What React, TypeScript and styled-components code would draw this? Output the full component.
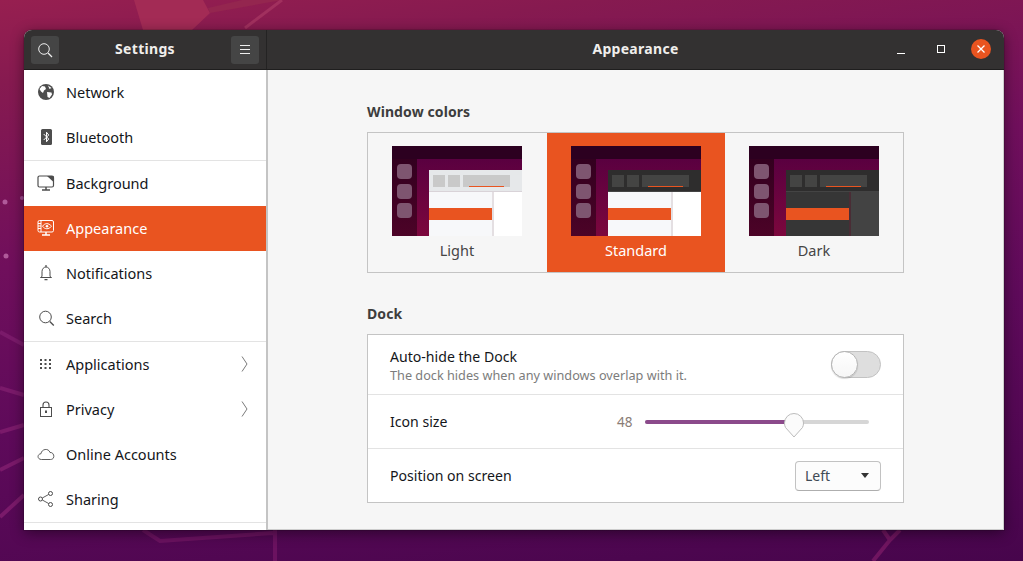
import * as React from 'react';
import styled, { createGlobalStyle } from 'styled-components';

const accent = '#e95420';
const uiFont = '"Noto Sans", "Open Sans", sans-serif';

const GlobalStyle = createGlobalStyle`
  html, body {
    margin: 0;
    padding: 0;
    height: 100%;
    overflow: hidden;
  }
  body {
    font-family: ${uiFont};
    color: #1b1b1b;
  }
`;

const Desktop = styled.div`
  position: relative;
  box-sizing: border-box;
  width: 1023px;
  height: 561px;
  padding: 30px 19px 31px 24px;
  overflow: hidden;
  background: linear-gradient(172deg, #971f50 0%, #861a50 12%, #700f5c 38%, #5e0a5a 62%, #47054c 100%);
`;

const Wallpaper = styled.svg`
  position: absolute;
  inset: 0;
  width: 1023px;
  height: 561px;
`;

const Window = styled.div`
  position: relative;
  height: 500px;
  display: flex;
  flex-direction: column;
  border-radius: 8px 8px 0 0;
  overflow: hidden;
  background: #f6f6f6;
  box-shadow: 0 3px 14px rgba(0, 0, 0, 0.45), 0 0 0 1px rgba(0, 0, 0, 0.12);
`;

const HeaderBar = styled.header`
  flex: none;
  height: 40px;
  display: flex;
  background: #333131;
  border-bottom: 1px solid #1f1e1e;
  box-sizing: border-box;
  color: #f0eeec;
`;

const HeaderLeft = styled.div`
  flex: none;
  width: 243px;
  box-sizing: border-box;
  padding: 0 7px;
  display: flex;
  align-items: center;
  justify-content: space-between;
  border-right: 1px solid #242323;
`;

const HeaderRight = styled.div`
  flex: 1;
  position: relative;
  display: flex;
  align-items: center;
  justify-content: center;
`;

const HeaderTitle = styled.div`
  font-size: 14px;
  font-weight: 700;
  letter-spacing: 0.3px;
  padding-bottom: 2px;
`;

const HeaderButton = styled.div`
  width: 28px;
  height: 28px;
  border-radius: 3px;
  background: #454545;
  display: flex;
  align-items: center;
  justify-content: center;
`;

const WindowControls = styled.div`
  position: absolute;
  right: 13px;
  top: 9px;
  display: flex;
  gap: 20px;
`;

const WindowControl = styled.div<{ $close?: boolean }>`
  width: 20px;
  height: 20px;
  border-radius: 50%;
  background: ${(p) => (p.$close ? accent : 'transparent')};
  display: flex;
  align-items: center;
  justify-content: center;
`;

const Body = styled.div`
  flex: 1;
  min-height: 0;
  display: flex;
`;

const Sidebar = styled.nav`
  flex: none;
  width: 244px;
  box-sizing: border-box;
  background: #fff;
  border-right: 2px solid #c4c4c4;
  overflow: hidden;
`;

const NavRow = styled.div<{ $active?: boolean; $divided?: boolean }>`
  height: ${(p) => (p.$divided ? 46 : 45)}px;
  box-sizing: border-box;
  display: flex;
  align-items: center;
  padding: 0 18px 1px 13px;
  font-size: 14.5px;
  color: ${(p) => (p.$active ? '#fff' : '#14161a')};
  background: ${(p) => (p.$active ? accent : 'transparent')};
  border-bottom: ${(p) => (p.$divided ? '1px solid #e3e3e3' : 'none')};
`;

const NavIcon = styled.svg`
  flex: none;
  width: 18px;
  height: 18px;
  margin-right: 11px;
  fill: none;
  stroke: currentColor;
`;

const NavIconSlot = styled.span<{ $active?: boolean }>`
  display: flex;
  color: ${(p) => (p.$active ? '#fff' : '#4d4d4d')};
`;

const NavLabel = styled.span`
  flex: 1;
`;

const Content = styled.main`
  flex: 1;
  display: flex;
  flex-direction: column;
  align-items: center;
  padding-top: 31px;
  border-right: 1px solid #cdcdcd;
  border-bottom: 1px solid #cdcdcd;
`;

const Column = styled.div`
  width: 537px;
`;

const SectionTitle = styled.h2`
  margin: 0 0 10px;
  font-size: 14px;
  line-height: 21px;
  font-weight: 700;
  color: #3d3d3d;
  letter-spacing: 0.1px;
`;

const ThemeFrame = styled.div`
  display: grid;
  grid-template-columns: 179px 178px 178px;
  height: 141px;
  box-sizing: border-box;
  border: 1px solid #c4c4c4;
  margin-bottom: 30px;
`;

const ThemeOption = styled.div<{ $selected?: boolean }>`
  display: flex;
  flex-direction: column;
  align-items: center;
  padding-top: 13px;
  font-size: 14.5px;
  color: ${(p) => (p.$selected ? '#fff' : '#454545')};
  background: ${(p) => (p.$selected ? accent : 'transparent')};
  &:first-child {
    padding-right: 1px;
  }
`;

const ThemeLabel = styled.div`
  margin-top: 4px;
  line-height: 20px;
`;

const DockList = styled.div`
  background: #fff;
  border: 1px solid #c4c4c4;
`;

const DockRow = styled.div<{ $height: number }>`
  height: ${(p) => p.$height}px;
  display: flex;
  align-items: center;
  justify-content: space-between;
  padding: 0 22px;
  font-size: 14.1px;
  color: #14161a;
  & + & {
    border-top: 1px solid #e3e3e3;
  }
`;

const RowName = styled.div`
  line-height: 18px;
`;

const RowHint = styled.div`
  margin-top: 2px;
  font-size: 12.7px;
  line-height: 14px;
  color: #7c7c7c;
`;

const Toggle = styled.div`
  width: 50px;
  height: 27px;
  box-sizing: border-box;
  border: 1px solid #c2c2c2;
  border-radius: 14px;
  background: #dedede;
  position: relative;
`;

const ToggleKnob = styled.div`
  position: absolute;
  left: -1px;
  top: -1px;
  width: 27px;
  height: 27px;
  box-sizing: border-box;
  border-radius: 50%;
  background: linear-gradient(#fff, #f6f6f6);
  border: 1px solid #b5b5b5;
  box-shadow: 0 1px 1px rgba(0, 0, 0, 0.15);
`;

const SliderWrap = styled.div`
  display: flex;
  align-items: center;
  margin-right: 12px;
`;

const SliderValue = styled.span`
  width: 28px;
  font-size: 13.5px;
  color: #8a7d76;
`;

const SliderTrack = styled.div`
  width: 224px;
  height: 4px;
  border-radius: 2px;
  background: #d6d6d6;
  position: relative;
`;

const SliderFill = styled.div`
  height: 100%;
  border-radius: 2px;
  background: #8b4a8b;
`;

const SliderHandle = styled.svg`
  position: absolute;
  top: -8px;
  width: 22px;
  height: 26px;
  margin-left: -11px;
`;

const Dropdown = styled.div`
  width: 86px;
  height: 30px;
  box-sizing: border-box;
  padding: 0 9px;
  display: flex;
  align-items: center;
  justify-content: space-between;
  border: 1px solid #c2c2c2;
  border-bottom-color: #aeaeae;
  border-radius: 4px;
  background: #fcfcfc;
  font-size: 14px;
  color: #3f4a55;
`;

const Caret = styled.span`
  width: 0;
  height: 0;
  border-left: 4.5px solid transparent;
  border-right: 4.5px solid transparent;
  border-top: 5px solid #333;
  margin-right: 2px;
`;

type ThumbTheme = 'light' | 'standard' | 'dark';

const Thumbnail = ({ theme, id }: { theme: ThumbTheme; id: string }) => {
  const bar = theme === 'light' ? '#e6e8ea' : '#2e2d2d';
  const chip = theme === 'light' ? '#c9c9c9' : '#444443';
  const list = theme === 'dark' ? '#363636' : '#f7f8fa';
  const pane = theme === 'dark' ? '#434343' : '#ffffff';
  const seam = theme === 'dark' ? '#4a2c35' : '#e4dfe2';
  return (
    <svg width="130" height="90" viewBox="0 0 130 90" style={{ display: 'block' }}>
      <defs>
        <linearGradient id={`${id}-dock`} x1="0" y1="0" x2="0" y2="1">
          <stop offset="0" stopColor="#33001f" />
          <stop offset="1" stopColor="#4c0327" />
        </linearGradient>
        <linearGradient id={`${id}-bg`} x1="0" y1="0" x2="0" y2="1">
          <stop offset="0" stopColor="#5a0040" />
          <stop offset="1" stopColor="#7c073d" />
        </linearGradient>
      </defs>
      <rect x="0" y="13" width="25" height="77" fill={`url(#${id}-dock)`} />
      <rect x="25" y="13" width="105" height="77" fill={`url(#${id}-bg)`} />
      <rect x="0" y="0" width="130" height="13" fill="#2c0020" />
      {[18, 38, 57].map((y) => (
        <rect key={y} x="5" y={y} width="15" height="15" rx="4" fill="#7e5570" />
      ))}
      <rect x="37" y="24" width="93" height="21" fill={bar} />
      <rect x="41" y="29" width="12" height="12" fill={chip} />
      <rect x="56" y="29" width="12" height="12" fill={chip} />
      <rect x="71" y="29" width="47" height="12" fill={chip} />
      <rect x="77" y="40" width="35" height="1" fill={accent} />
      <rect x="37" y="45" width="93" height="1" fill={theme === 'light' ? '#d9d3d8' : '#444'} />
      <rect x="37" y="46" width="63" height="44" fill={list} />
      <rect x="37" y="62" width="63" height="12" fill={accent} />
      <rect x="100" y="46" width="2" height="44" fill={seam} />
      <rect x="102" y="46" width="28" height="44" fill={pane} />
    </svg>
  );
};

const icons: Record<string, React.ReactNode> = {
  network: (
    <>
      <circle cx="9" cy="9" r="8" fill="currentColor" stroke="none" />
      <path d="M5 3l3 .5 1 2.500-2 1.500-1 2.500-2-1.500-1.500-2.500zM10 9l4.500 .5 .5 2-2.500 3.500-2-1zM11 2.500l3.500 2.500-2 1z" fill="#fff" stroke="none" />
    </>
  ),
  bluetooth: (
    <>
      <rect x="4" y="1" width="11" height="16" rx="1.500" fill="currentColor" stroke="none" />
      <path d="M6.700 6l5 5-2.200 2.800V4.200L11.700 7l-5 5" stroke="#fff" strokeWidth="1" />
    </>
  ),
  background: (
    <>
      <rect x="1" y="2" width="15.500" height="11" rx="1.500" strokeWidth="1.200" />
      <path d="M10 2h6.500v6z" fill="currentColor" stroke="none" />
      <path d="M5 16h8M9 13v3" strokeWidth="1.500" />
    </>
  ),
  appearance: (
    <>
      <rect x="1" y="1.500" width="15.500" height="11.500" rx="1.500" strokeWidth="1" />
      <path d="M1 4.500h3M1 7h3M1 9.500h3M4 1.500v11.500" strokeWidth="1" />
      <path d="M5.500 7.200c2.500-3.400 6-3.400 9 0-3 3.400-6.500 3.400-9 0z" strokeWidth="1" />
      <circle cx="10" cy="7.200" r="1.300" fill="currentColor" stroke="none" />
      <path d="M5 16h8M9 13v3" strokeWidth="1.500" />
    </>
  ),
  notifications: (
    <>
      <path d="M5 12.500V7.500c0-2.500 1.800-4.500 4-4.500s4 2 4 4.500v5l1.500 1h-11z" strokeWidth="1" />
      <path d="M7.500 15.700h3M9 1v2" strokeWidth="1.200" />
    </>
  ),
  search: (
    <>
      <circle cx="8.500" cy="8" r="5.800" strokeWidth="1" />
      <path d="M12.800 12.500l4 4" strokeWidth="1.300" />
    </>
  ),
  applications: (
    <g fill="currentColor" stroke="none">
      {[4, 8, 12].flatMap((y) =>
        [3, 7.500, 12].map((x) => <rect key={`${x}-${y}`} x={x} y={y} width="2" height="2" />),
      )}
    </g>
  ),
  privacy: (
    <>
      <rect x="3.500" y="7.500" width="11" height="9" strokeWidth="1" />
      <path d="M6 7.500V5a3 3 0 0 1 6 0v2.500" strokeWidth="1.100" />
      <rect x="8" y="10.500" width="2" height="2.500" fill="currentColor" stroke="none" />
    </>
  ),
  online: (
    <path d="M4.500 14.500c-4.500 0-4.500-5.500-.5-5.800.5-4.800 7.500-6 9-1.200 4.500-.5 5.500 7 .5 7z" strokeWidth="0.900" />
  ),
  sharing: (
    <>
      <circle cx="3.500" cy="9" r="2" strokeWidth="1" />
      <circle cx="13.500" cy="3.500" r="2" strokeWidth="1" />
      <circle cx="13.500" cy="14.500" r="2" strokeWidth="1" />
      <path d="M5.300 8l6.500-3.600M5.300 10l6.500 3.600" strokeWidth="0.900" />
    </>
  ),
};

type NavItem = { key: string; label: string; divided?: boolean; chevron?: boolean; active?: boolean };

const navItems: NavItem[] = [
  { key: 'network', label: 'Network' },
  { key: 'bluetooth', label: 'Bluetooth', divided: true },
  { key: 'background', label: 'Background' },
  { key: 'appearance', label: 'Appearance', active: true },
  { key: 'notifications', label: 'Notifications' },
  { key: 'search', label: 'Search', divided: true },
  { key: 'applications', label: 'Applications', chevron: true },
  { key: 'privacy', label: 'Privacy', chevron: true },
  { key: 'online', label: 'Online Accounts' },
  { key: 'sharing', label: 'Sharing', divided: true },
];

const App = () => {
  return (
    <>
      <GlobalStyle />
      <Desktop>
        <Wallpaper viewBox="0 0 1023 561">
          <path d="M134 0l9 30h49l18-17-7-13z" fill="#a32b55" />
          <path d="M210 13l72-13h-40l-34 8z" fill="#94264f" />
          <path d="M245 28l37-28" stroke="#a1305e" strokeWidth="3" fill="none" />
          <g stroke="#7a1a6a" strokeWidth="4" fill="none">
            <path d="M0 332l24 13M0 388l24 7M0 432l24-7M0 470l24-12M0 517l24-22" />
            <path d="M143 530l17 11 113-8M275 530v31" stroke="#6b1260" />
            <path d="M883 530l7 10-17 21M900 530l-10 10" stroke="#701560" />
          </g>
          <circle cx="5" cy="202" r="2.500" fill="#b05a9a" />
          <circle cx="6" cy="256" r="2.500" fill="#b05a9a" />
          <circle cx="22" cy="198" r="2" fill="#a04a90" />
        </Wallpaper>
        <Window>
          <HeaderBar>
            <HeaderLeft>
              <HeaderButton>
                <svg width="16" height="16" viewBox="0 0 16 16" fill="none" stroke="#eee">
                  <circle cx="7" cy="7" r="5.300" strokeWidth="1" />
                  <path d="M11 11l4 4" strokeWidth="1.300" />
                </svg>
              </HeaderButton>
              <HeaderTitle>Settings</HeaderTitle>
              <HeaderButton>
                <svg width="12" height="10" viewBox="0 0 12 10" stroke="#eee" strokeWidth="1">
                  <path d="M1 .5h10M1 4.500h10M1 8.500h10" />
                </svg>
              </HeaderButton>
            </HeaderLeft>
            <HeaderRight>
              <HeaderTitle>Appearance</HeaderTitle>
              <WindowControls>
                <WindowControl>
                  <svg width="10" height="10" viewBox="0 0 10 10" stroke="#fff" strokeWidth="1">
                    <path d="M1 9.500h8" />
                  </svg>
                </WindowControl>
                <WindowControl>
                  <svg width="10" height="10" viewBox="0 0 10 10" fill="none" stroke="#fff" strokeWidth="1">
                    <rect x="1.500" y="1.500" width="7" height="7" />
                  </svg>
                </WindowControl>
                <WindowControl $close>
                  <svg width="10" height="10" viewBox="0 0 10 10" stroke="#fff" strokeWidth="1.300">
                    <path d="M1.500 1.500l7 7M8.500 1.500l-7 7" />
                  </svg>
                </WindowControl>
              </WindowControls>
            </HeaderRight>
          </HeaderBar>
          <Body>
            <Sidebar>
              {navItems.map((item) => (
                <NavRow key={item.key} $active={item.active} $divided={item.divided}>
                  <NavIconSlot $active={item.active}>
                    <NavIcon viewBox="0 0 18 18">{icons[item.key]}</NavIcon>
                  </NavIconSlot>
                  <NavLabel>{item.label}</NavLabel>
                  {item.chevron && (
                    <svg width="8" height="16" viewBox="0 0 8 16" fill="none" stroke="#7a7a7a" strokeWidth="1">
                      <path d="M2 .5l5 7.500-5 7.500" />
                    </svg>
                  )}
                </NavRow>
              ))}
            </Sidebar>
            <Content>
              <Column>
                <SectionTitle>Window colors</SectionTitle>
                <ThemeFrame>
                  <ThemeOption>
                    <Thumbnail theme="light" id="light" />
                    <ThemeLabel>Light</ThemeLabel>
                  </ThemeOption>
                  <ThemeOption $selected>
                    <Thumbnail theme="standard" id="standard" />
                    <ThemeLabel>Standard</ThemeLabel>
                  </ThemeOption>
                  <ThemeOption>
                    <Thumbnail theme="dark" id="dark" />
                    <ThemeLabel>Dark</ThemeLabel>
                  </ThemeOption>
                </ThemeFrame>
                <SectionTitle>Dock</SectionTitle>
                <DockList>
                  <DockRow $height={59}>
                    <div>
                      <RowName>Auto-hide the Dock</RowName>
                      <RowHint>The dock hides when any windows overlap with it.</RowHint>
                    </div>
                    <Toggle>
                      <ToggleKnob />
                    </Toggle>
                  </DockRow>
                  <DockRow $height={53}>
                    <span>Icon size</span>
                    <SliderWrap>
                      <SliderValue>48</SliderValue>
                      <SliderTrack>
                        <SliderFill style={{ width: `${(149 / 224) * 100}%` }} />
                        <SliderHandle viewBox="0 0 22 26" style={{ left: 149 }}>
                          <path
                            d="M11 25L2.500 15.500A9.500 9.500 0 0 1 1.500 11 9.500 9.500 0 0 1 20.500 11a9.500 9.500 0 0 1-1 4.500z"
                            fill="#fbfbfb"
                            stroke="#bcbcbc"
                          />
                        </SliderHandle>
                      </SliderTrack>
                    </SliderWrap>
                  </DockRow>
                  <DockRow $height={53}>
                    <span>Position on screen</span>
                    <Dropdown>
                      <span>Left</span>
                      <Caret />
                    </Dropdown>
                  </DockRow>
                </DockList>
              </Column>
            </Content>
          </Body>
        </Window>
      </Desktop>
    </>
  );
};

export default App;
